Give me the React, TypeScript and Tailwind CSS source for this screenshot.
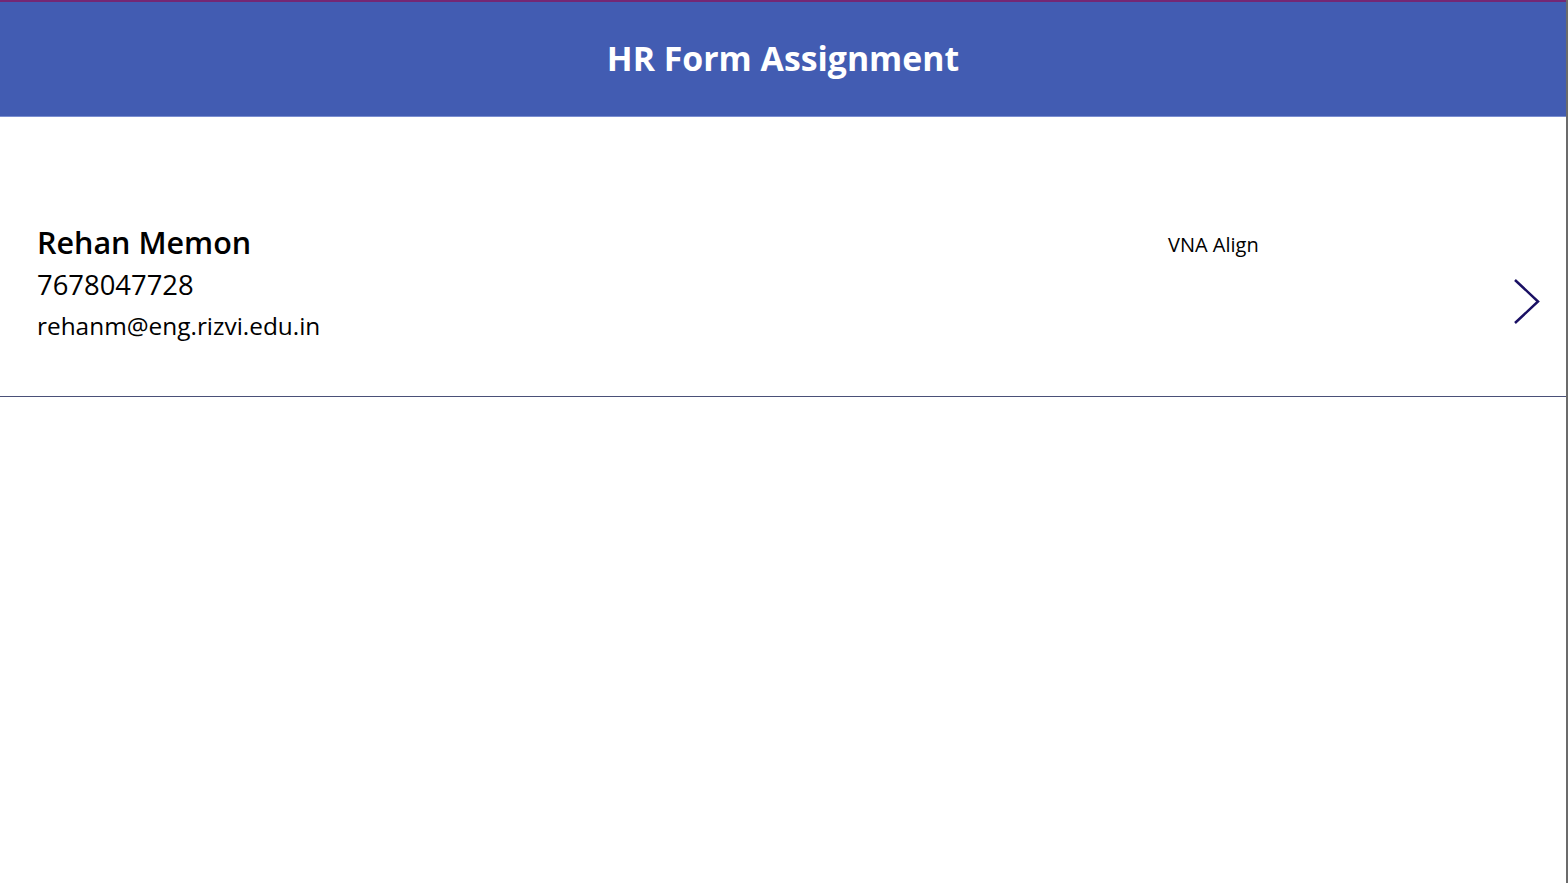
import React from "react";

export default function App() {
  return (
    <div
      className="w-[1568px] h-[883px] bg-white flex overflow-hidden"
      style={{ fontFamily: '"Open Sans", "Noto Sans", sans-serif' }}
    >
      <div className="flex-1 flex flex-col">
        <div className="h-[2px] bg-[#742774]" />
        <div className="h-[114px] bg-[#425cb2] flex items-center justify-center pb-[1px]">
          <h1 className="text-white font-bold text-[33.8px] leading-none">HR Form Assignment</h1>
        </div>
        <div className="h-[1px] bg-[#7a8ed0]" />
        <div className="h-[280px] flex items-start border-b border-[#4a5078] relative">
          <div className="pl-[37px] pt-[103px] flex flex-col text-black">
            <div className="text-[30.5px] leading-[44px] font-semibold">Rehan Memon</div>
            <div className="text-[27.4px] leading-[42px]">7678047728</div>
            <div className="text-[24.4px] leading-[40px]">rehanm@eng.rizvi.edu.in</div>
          </div>
          <div className="absolute left-[1168px] top-[118px] text-[20px] text-black leading-none">VNA Align</div>
          <div className="ml-auto mr-[25px] mt-[162px]">
            <svg width="28" height="46" viewBox="0 0 28 46" fill="none">
              <path d="M2 1 L25 22.5 L2 44" stroke="#1a1064" strokeWidth="2.5" />
            </svg>
          </div>
        </div>
      </div>
      <div className="w-[2px] bg-[#6b6b6b]" />
    </div>
  );
}
